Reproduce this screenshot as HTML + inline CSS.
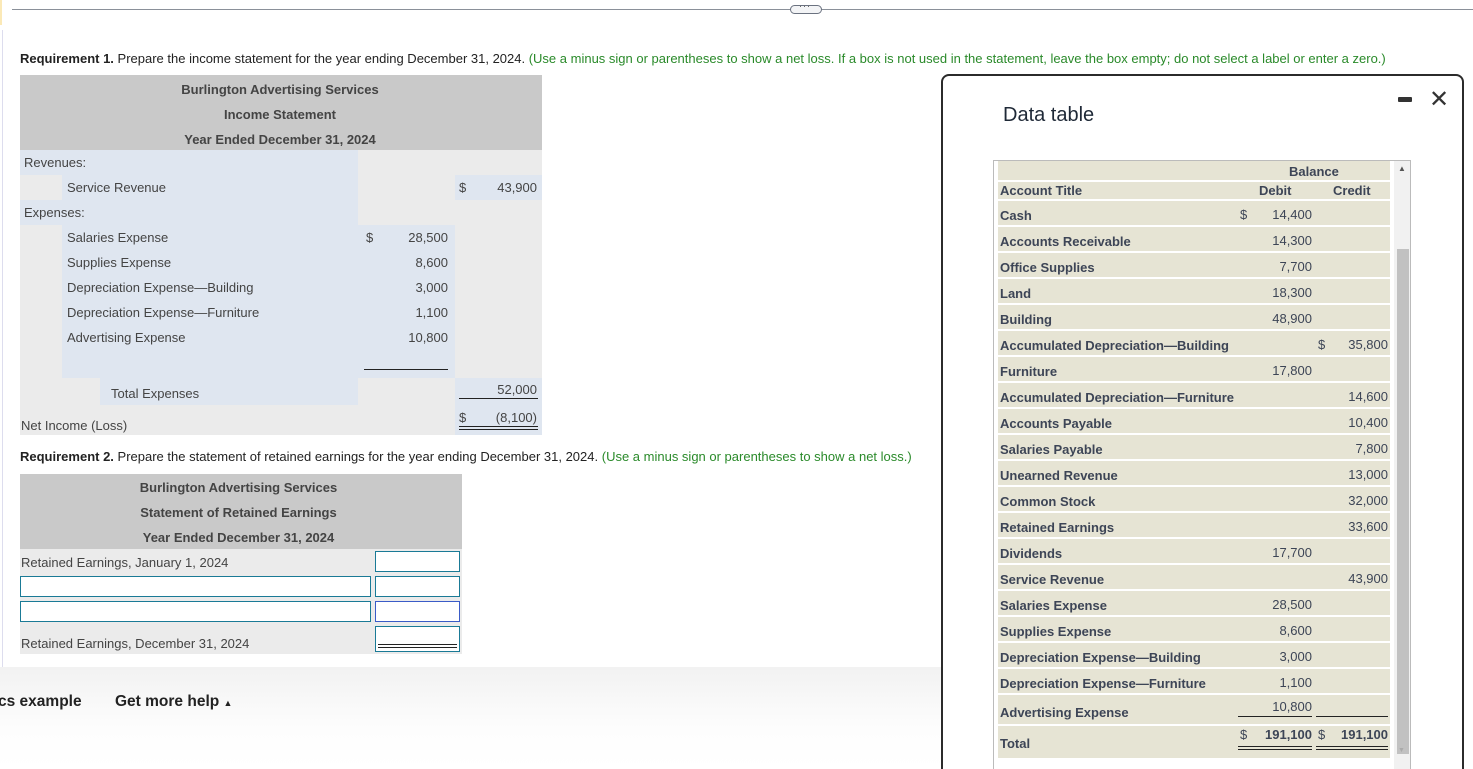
<!DOCTYPE html>
<html style="height:769px;overflow:hidden"><head><meta charset="utf-8"><style>
*{margin:0;padding:0;box-sizing:border-box}
body{width:1473px;height:769px;overflow:hidden;background:#fff;font-family:"Liberation Sans",Arial,sans-serif;font-size:13px;color:#444;position:relative}
.a{position:absolute;white-space:nowrap}
.b{position:absolute}
.t{line-height:16px}
.r{text-align:right}
.hd{font-weight:bold;color:#444;text-align:center}
.blue{background:#dfe6f0}
.gray{background:#ebebeb}
.inp{position:absolute;background:#fff;border:1px solid #1a7a96}
.dl{font-weight:bold;color:#3d4556}
.dn{color:#3d4556;text-align:right}
.sep{position:absolute;left:998px;width:392px;height:2px;background:#fff}
</style></head><body>
<div class="b" style="left:12px;top:9px;width:1461px;height:1px;background:#8a9099"></div>
<div class="b" style="left:790px;top:5px;width:32px;height:9px;border:1px solid #6b7280;border-radius:5px;background:#f3f4f6"></div>
<div class="a" style="left:799px;top:1px;font-size:9px;color:#555;letter-spacing:1px">···</div>
<div class="b" style="left:0;top:0;width:2px;height:25px;background:#fbe9b7"></div>
<div class="b" style="left:2px;top:30px;width:1px;height:637px;background:#dde"></div>

<div class="a t" style="left:20px;top:51px;color:#222"><b>Requirement 1.</b> Prepare the income statement for the year ending December 31, 2024. <span style="color:#2a8a2a">(Use a minus sign or parentheses to show a net loss. If a box is not used in the statement, leave the box empty; do not select a label or enter a zero.)</span></div>

<div class="b" style="left:20px;top:75px;width:522px;height:75px;background:#c9c9c9"></div>
<div class="a hd" style="left:20px;top:82px;width:520px;">Burlington Advertising Services</div>
<div class="a hd" style="left:20px;top:107px;width:520px;">Income Statement</div>
<div class="a hd" style="left:20px;top:132px;width:520px;">Year Ended December 31, 2024</div>
<div class="b gray" style="left:20px;top:150px;width:522px;height:285px"></div>
<div class="b blue" style="left:20px;top:150px;width:338px;height:25px"></div>
<div class="b blue" style="left:62px;top:175px;width:296px;height:25px"></div>
<div class="b blue" style="left:455px;top:175px;width:87px;height:25px"></div>
<div class="b blue" style="left:20px;top:200px;width:338px;height:25px"></div>
<div class="b blue" style="left:62px;top:225px;width:296px;height:153px"></div>
<div class="b blue" style="left:358px;top:225px;width:97px;height:153px"></div>
<div class="b" style="left:364px;top:369px;width:84px;height:1px;background:#222"></div>
<div class="b blue" style="left:100px;top:378px;width:258px;height:27px"></div>
<div class="b blue" style="left:455px;top:378px;width:87px;height:57px"></div>
<div class="b" style="left:459px;top:398px;width:79px;height:1px;background:#222"></div>
<div class="b" style="left:459px;top:426px;width:79px;height:1px;background:#222"></div>
<div class="b" style="left:459px;top:429px;width:79px;height:1px;background:#222"></div>
<div class="a t" style="left:24px;top:155px">Revenues:</div>
<div class="a t" style="left:67px;top:180px">Service Revenue</div>
<div class="a t" style="left:459px;top:180px">$</div>
<div class="a t r" style="left:470px;top:180px;width:67px">43,900</div>
<div class="a t" style="left:24px;top:205px">Expenses:</div>
<div class="a t" style="left:67px;top:230px">Salaries Expense</div>
<div class="a t" style="left:366px;top:230px">$</div>
<div class="a t r" style="left:380px;top:230px;width:68px">28,500</div>
<div class="a t" style="left:67px;top:255px">Supplies Expense</div>
<div class="a t r" style="left:380px;top:255px;width:68px">8,600</div>
<div class="a t" style="left:67px;top:280px">Depreciation Expense—Building</div>
<div class="a t r" style="left:380px;top:280px;width:68px">3,000</div>
<div class="a t" style="left:67px;top:305px">Depreciation Expense—Furniture</div>
<div class="a t r" style="left:380px;top:305px;width:68px">1,100</div>
<div class="a t" style="left:67px;top:330px">Advertising Expense</div>
<div class="a t r" style="left:380px;top:330px;width:68px">10,800</div>
<div class="a t" style="left:111px;top:386px">Total Expenses</div>
<div class="a t r" style="left:470px;top:382px;width:67px">52,000</div>
<div class="a t" style="left:21px;top:418px">Net Income (Loss)</div>
<div class="a t" style="left:459px;top:410px">$</div>
<div class="a t r" style="left:470px;top:410px;width:67px">(8,100)</div>

<div class="a t" style="left:20px;top:449px;color:#222"><b>Requirement 2.</b> Prepare the statement of retained earnings for the year ending December 31, 2024. <span style="color:#2a8a2a">(Use a minus sign or parentheses to show a net loss.)</span></div>

<div class="b" style="left:20px;top:474px;width:442px;height:75px;background:#c9c9c9"></div>
<div class="a hd" style="left:20px;top:480px;width:437px">Burlington Advertising Services</div>
<div class="a hd" style="left:20px;top:505px;width:437px">Statement of Retained Earnings</div>
<div class="a hd" style="left:20px;top:530px;width:437px">Year Ended December 31, 2024</div>
<div class="b gray" style="left:20px;top:549px;width:442px;height:105px"></div>
<div class="a t" style="left:21px;top:555px">Retained Earnings, January 1, 2024</div>
<div class="inp" style="left:375px;top:551px;width:85px;height:21px"></div>
<div class="inp" style="left:20px;top:576px;width:351px;height:21px"></div>
<div class="inp" style="left:375px;top:576px;width:85px;height:21px"></div>
<div class="inp" style="left:20px;top:601px;width:351px;height:21px"></div>
<div class="inp" style="left:375px;top:601px;width:85px;height:21px;border-color:#3a5bc7"></div>
<div class="a t" style="left:21px;top:636px">Retained Earnings, December 31, 2024</div>
<div class="inp" style="left:375px;top:626px;width:85px;height:26px"></div>
<div class="b" style="left:378px;top:644px;width:79px;height:1px;background:#222"></div>
<div class="b" style="left:378px;top:647px;width:79px;height:1px;background:#222"></div>

<div class="b" style="left:0;top:667px;width:942px;height:102px;background:linear-gradient(#f2f2f2,#fdfdfd 60%,#fff)"></div>
<div class="a" style="left:-2px;top:693px;font-size:15.5px;font-weight:bold;color:#222">cs example</div>
<div class="a" style="left:115px;top:693px;font-size:15.5px;font-weight:bold;color:#222">Get more help <span style="font-size:9px">▲</span></div>

<div class="b" style="left:941px;top:74px;width:523px;height:720px;border:2px solid #2b2b2b;border-radius:8px;background:#fff"></div>
<div class="a" style="left:1003px;top:104px;font-size:20px;color:#1f2937">Data table</div>
<div class="b" style="left:1398px;top:97px;width:14px;height:5px;background:#333;border-radius:1px"></div>
<div class="a" style="left:1429px;top:85px;font-size:24px;color:#333">✕</div>
<div class="b" style="left:993px;top:160px;width:418px;height:620px;border:1px solid #bbb"></div>
<div class="b" style="left:998px;top:161px;width:392px;height:620px;background:#e6e4d4"></div>
<div class="b" style="left:1394px;top:161px;width:16px;height:620px;background:#f1f1f1"></div>
<div class="b" style="left:1397px;top:249px;width:12px;height:505px;background:#c1c1c1"></div>
<div class="a" style="left:1398px;top:164px;font-size:8px;color:#555">▲</div>
<div class="a" style="left:1398px;top:747px;font-size:7px;color:#aaa">▼</div>
<div class="sep" style="top:180px"></div>
<div class="sep" style="top:199px"></div>
<div class="a dl t" style="left:1289px;top:164px">Balance</div>
<div class="a dl t" style="left:1000px;top:183px">Account Title</div>
<div class="a dl t" style="left:1259px;top:183px">Debit</div>
<div class="a dl t" style="left:1333px;top:183px">Credit</div>

<div class="sep" style="top:225px"></div><div class="sep" style="top:251px"></div><div class="sep" style="top:277px"></div><div class="sep" style="top:303px"></div><div class="sep" style="top:329px"></div><div class="sep" style="top:355px"></div><div class="sep" style="top:381px"></div><div class="sep" style="top:407px"></div><div class="sep" style="top:433px"></div><div class="sep" style="top:459px"></div><div class="sep" style="top:485px"></div><div class="sep" style="top:511px"></div><div class="sep" style="top:537px"></div><div class="sep" style="top:563px"></div><div class="sep" style="top:589px"></div><div class="sep" style="top:615px"></div><div class="sep" style="top:641px"></div><div class="sep" style="top:667px"></div><div class="sep" style="top:693px"></div><div class="sep" style="top:724px"></div><div class="sep" style="top:758px;height:30px;background:#fff"></div>

<div class="a dl t" style="left:1000px;top:208px">Cash</div><div class="a t" style="left:1240px;top:207px;color:#3d4556">$</div><div class="a dn t" style="left:1250px;top:207px;width:62px">14,400</div>
<div class="a dl t" style="left:1000px;top:234px">Accounts Receivable</div><div class="a dn t" style="left:1250px;top:233px;width:62px">14,300</div>
<div class="a dl t" style="left:1000px;top:260px">Office Supplies</div><div class="a dn t" style="left:1250px;top:259px;width:62px">7,700</div>
<div class="a dl t" style="left:1000px;top:286px">Land</div><div class="a dn t" style="left:1250px;top:285px;width:62px">18,300</div>
<div class="a dl t" style="left:1000px;top:312px">Building</div><div class="a dn t" style="left:1250px;top:311px;width:62px">48,900</div>
<div class="a dl t" style="left:1000px;top:338px">Accumulated Depreciation—Building</div><div class="a t" style="left:1318px;top:337px;color:#3d4556">$</div><div class="a dn t" style="left:1326px;top:337px;width:62px">35,800</div>
<div class="a dl t" style="left:1000px;top:364px">Furniture</div><div class="a dn t" style="left:1250px;top:363px;width:62px">17,800</div>
<div class="a dl t" style="left:1000px;top:390px">Accumulated Depreciation—Furniture</div><div class="a dn t" style="left:1326px;top:389px;width:62px">14,600</div>
<div class="a dl t" style="left:1000px;top:416px">Accounts Payable</div><div class="a dn t" style="left:1326px;top:415px;width:62px">10,400</div>
<div class="a dl t" style="left:1000px;top:442px">Salaries Payable</div><div class="a dn t" style="left:1326px;top:441px;width:62px">7,800</div>
<div class="a dl t" style="left:1000px;top:468px">Unearned Revenue</div><div class="a dn t" style="left:1326px;top:467px;width:62px">13,000</div>
<div class="a dl t" style="left:1000px;top:494px">Common Stock</div><div class="a dn t" style="left:1326px;top:493px;width:62px">32,000</div>
<div class="a dl t" style="left:1000px;top:520px">Retained Earnings</div><div class="a dn t" style="left:1326px;top:519px;width:62px">33,600</div>
<div class="a dl t" style="left:1000px;top:546px">Dividends</div><div class="a dn t" style="left:1250px;top:545px;width:62px">17,700</div>
<div class="a dl t" style="left:1000px;top:572px">Service Revenue</div><div class="a dn t" style="left:1326px;top:571px;width:62px">43,900</div>
<div class="a dl t" style="left:1000px;top:598px">Salaries Expense</div><div class="a dn t" style="left:1250px;top:597px;width:62px">28,500</div>
<div class="a dl t" style="left:1000px;top:624px">Supplies Expense</div><div class="a dn t" style="left:1250px;top:623px;width:62px">8,600</div>
<div class="a dl t" style="left:1000px;top:650px">Depreciation Expense—Building</div><div class="a dn t" style="left:1250px;top:649px;width:62px">3,000</div>
<div class="a dl t" style="left:1000px;top:676px">Depreciation Expense—Furniture</div><div class="a dn t" style="left:1250px;top:675px;width:62px">1,100</div>
<div class="a dl t" style="left:1000px;top:705px">Advertising Expense</div><div class="a dn t" style="left:1250px;top:699px;width:62px">10,800</div>
<div class="b" style="left:1238px;top:716px;width:74px;height:1px;background:#222"></div>
<div class="b" style="left:1316px;top:716px;width:72px;height:1px;background:#222"></div>
<div class="a dl t" style="left:1000px;top:736px">Total</div>
<div class="a t" style="left:1240px;top:727px;color:#3d4556">$</div><div class="a dn t" style="left:1250px;top:727px;width:62px;font-weight:bold">191,100</div>
<div class="a t" style="left:1318px;top:727px;color:#3d4556">$</div><div class="a dn t" style="left:1326px;top:727px;width:62px;font-weight:bold">191,100</div>
<div class="b" style="left:1238px;top:746px;width:74px;height:1px;background:#222"></div>
<div class="b" style="left:1238px;top:749px;width:74px;height:1px;background:#222"></div>
<div class="b" style="left:1316px;top:746px;width:72px;height:1px;background:#222"></div>
<div class="b" style="left:1316px;top:749px;width:72px;height:1px;background:#222"></div>
</body></html>
